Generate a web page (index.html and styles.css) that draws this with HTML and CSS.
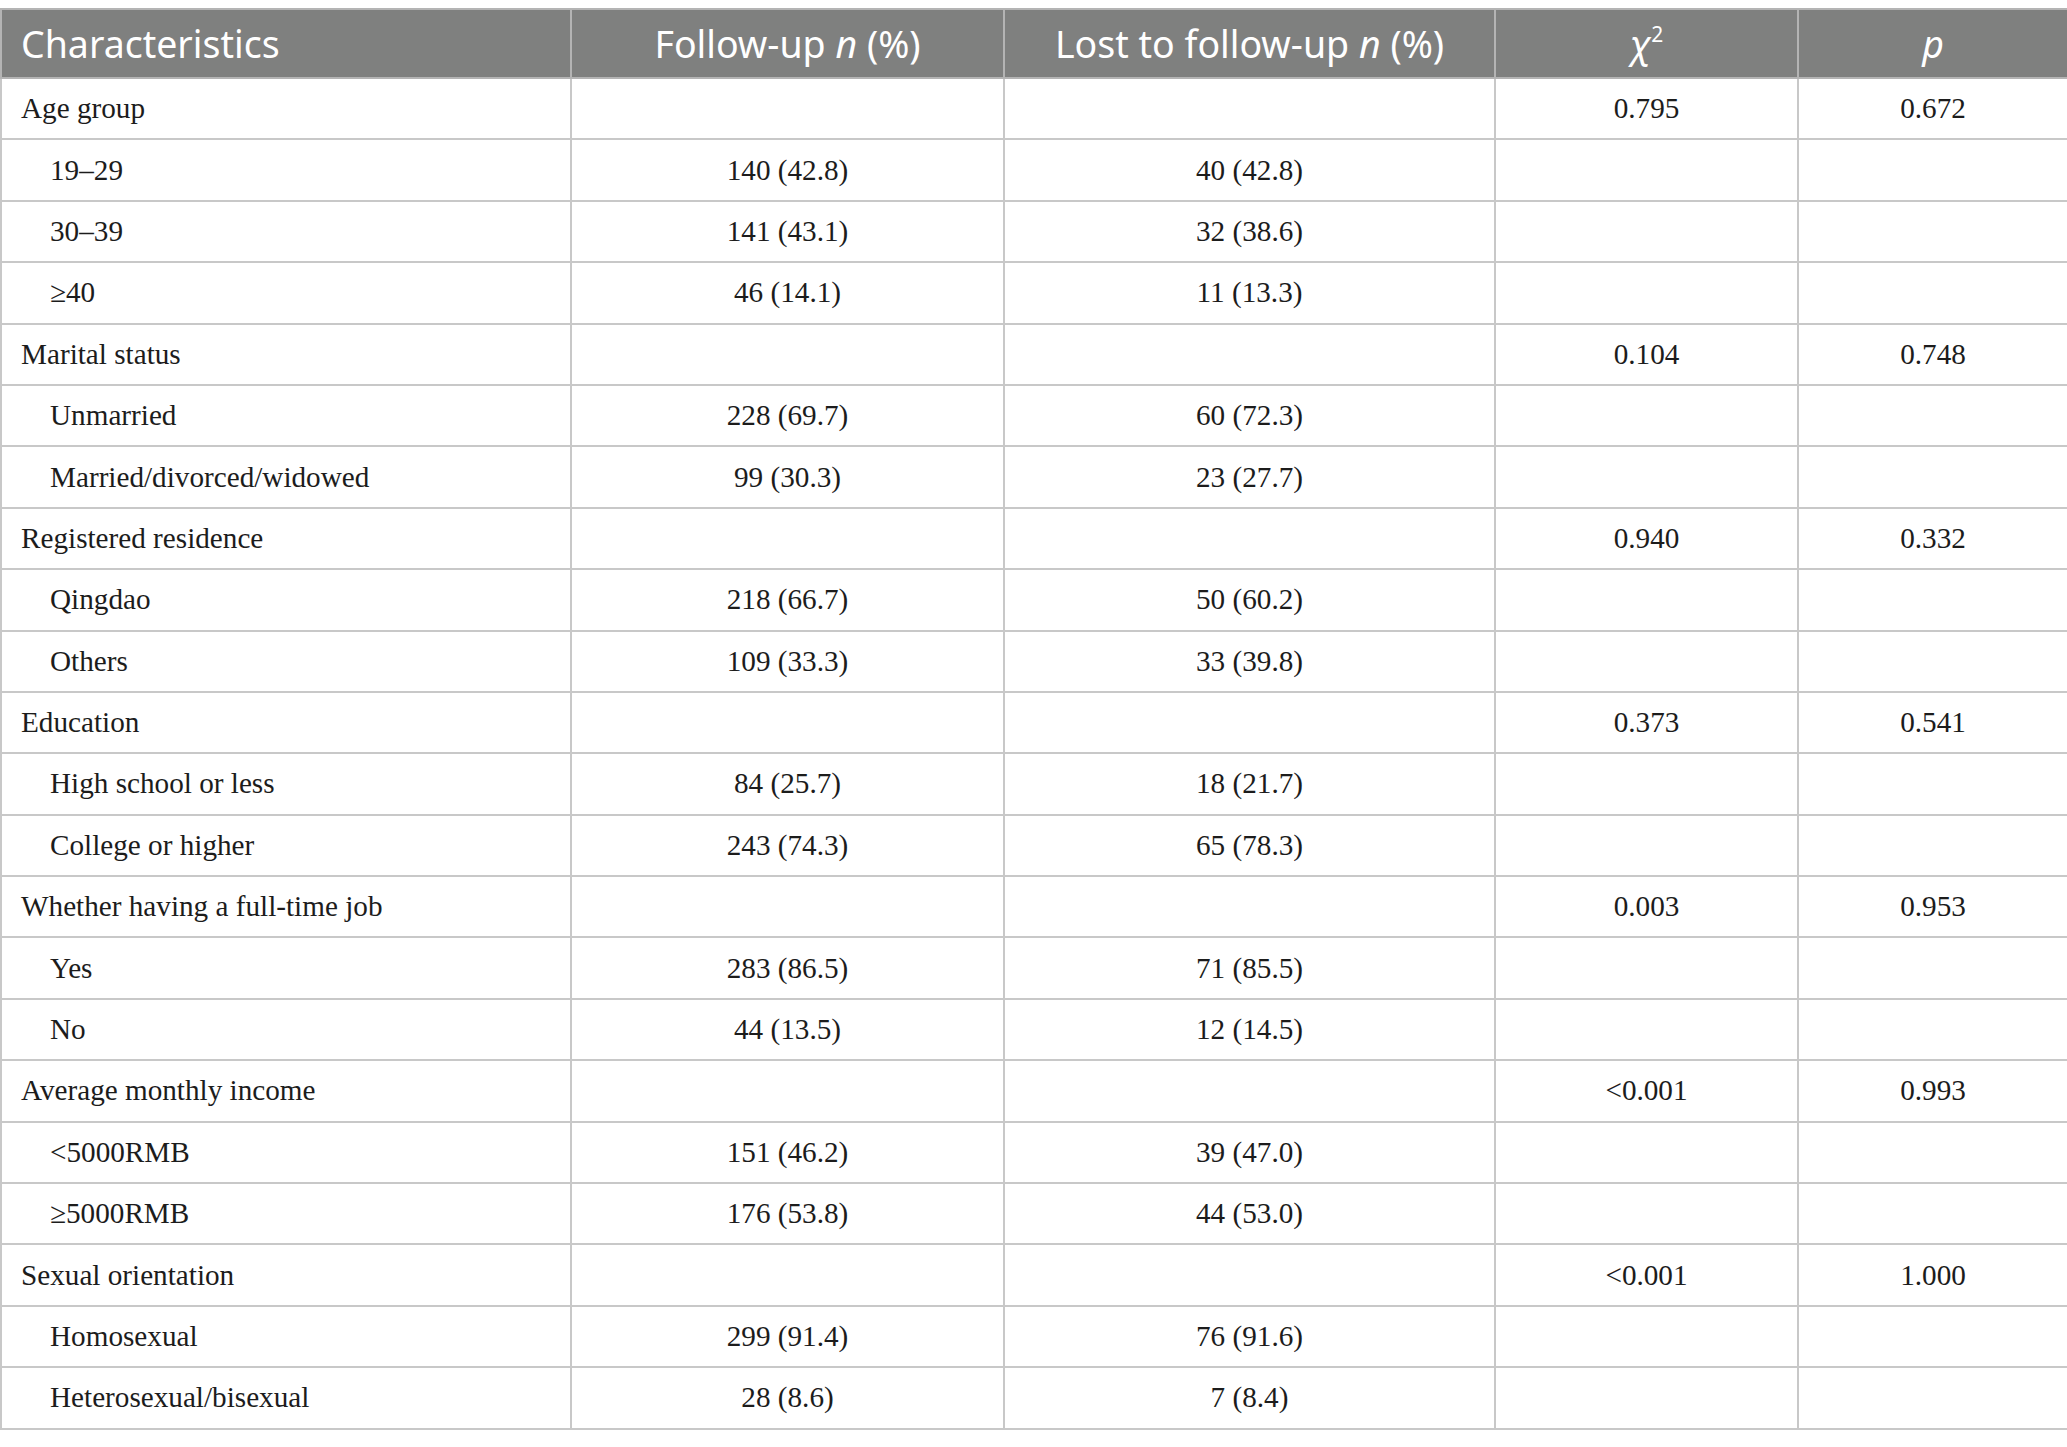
FILE: index.html
```html
<!DOCTYPE html>
<html>
<head>
<meta charset="utf-8">
<link rel="stylesheet" href="styles.css">
</head>
<body>
<table class="data">
  <colgroup>
    <col class="c1"><col class="c2"><col class="c3"><col class="c4"><col class="c5">
  </colgroup>
  <thead>
    <tr>
      <th class="left">Characteristics</th>
      <th>Follow-up <i>n</i> (%)</th>
      <th>Lost to follow-up <i>n</i> (%)</th>
      <th><i>χ</i><sup>2</sup></th>
      <th><i>p</i></th>
    </tr>
  </thead>
  <tbody>
    <tr><td>Age group</td><td></td><td></td><td>0.795</td><td>0.672</td></tr>
    <tr><td class="sub">19–29</td><td>140 (42.8)</td><td>40 (42.8)</td><td></td><td></td></tr>
    <tr><td class="sub">30–39</td><td>141 (43.1)</td><td>32 (38.6)</td><td></td><td></td></tr>
    <tr><td class="sub">≥40</td><td>46 (14.1)</td><td>11 (13.3)</td><td></td><td></td></tr>
    <tr><td>Marital status</td><td></td><td></td><td>0.104</td><td>0.748</td></tr>
    <tr><td class="sub">Unmarried</td><td>228 (69.7)</td><td>60 (72.3)</td><td></td><td></td></tr>
    <tr><td class="sub">Married/divorced/widowed</td><td>99 (30.3)</td><td>23 (27.7)</td><td></td><td></td></tr>
    <tr><td>Registered residence</td><td></td><td></td><td>0.940</td><td>0.332</td></tr>
    <tr><td class="sub">Qingdao</td><td>218 (66.7)</td><td>50 (60.2)</td><td></td><td></td></tr>
    <tr><td class="sub">Others</td><td>109 (33.3)</td><td>33 (39.8)</td><td></td><td></td></tr>
    <tr><td>Education</td><td></td><td></td><td>0.373</td><td>0.541</td></tr>
    <tr><td class="sub">High school or less</td><td>84 (25.7)</td><td>18 (21.7)</td><td></td><td></td></tr>
    <tr><td class="sub">College or higher</td><td>243 (74.3)</td><td>65 (78.3)</td><td></td><td></td></tr>
    <tr><td>Whether having a full-time job</td><td></td><td></td><td>0.003</td><td>0.953</td></tr>
    <tr><td class="sub">Yes</td><td>283 (86.5)</td><td>71 (85.5)</td><td></td><td></td></tr>
    <tr><td class="sub">No</td><td>44 (13.5)</td><td>12 (14.5)</td><td></td><td></td></tr>
    <tr><td>Average monthly income</td><td></td><td></td><td>&lt;0.001</td><td>0.993</td></tr>
    <tr><td class="sub">&lt;5000RMB</td><td>151 (46.2)</td><td>39 (47.0)</td><td></td><td></td></tr>
    <tr><td class="sub">≥5000RMB</td><td>176 (53.8)</td><td>44 (53.0)</td><td></td><td></td></tr>
    <tr><td>Sexual orientation</td><td></td><td></td><td>&lt;0.001</td><td>1.000</td></tr>
    <tr><td class="sub">Homosexual</td><td>299 (91.4)</td><td>76 (91.6)</td><td></td><td></td></tr>
    <tr><td class="sub">Heterosexual/bisexual</td><td>28 (8.6)</td><td>7 (8.4)</td><td></td><td></td></tr>
  </tbody>
</table>
</body>
</html>
```

FILE: styles.css
```css
html, body {
  margin: 0;
  padding: 0;
  background: #ffffff;
}
body {
  padding-top: 8px;
}
.data {
  width: 2067px;
  table-layout: fixed;
  border-collapse: collapse;
  border: 2px solid #c4c4c4;
}
.c1 { width: 570px; }
.c2 { width: 433px; }
.c3 { width: 491px; }
.c4 { width: 303px; }
.c5 { width: 270px; }
.data th {
  background: #7f807f;
  color: #ffffff;
  font-family: "Noto Sans", "Open Sans", sans-serif;
  font-weight: 400;
  font-size: 37.5px;
  line-height: 1.2;
  height: 67px;
  padding: 0 19px;
  text-align: center;
  vertical-align: middle;
  border: 2px solid #b4b4b4;
}
.data th.left {
  text-align: left;
}
.data th sup {
  font-size: 21px;
  vertical-align: 16px;
  line-height: 0;
}
.data td {
  font-family: "Liberation Serif", "Times New Roman", serif;
  font-size: 29.2px;
  color: #1c1c1c;
  height: 59.4px;
  padding: 0 19px;
  text-align: center;
  vertical-align: middle;
  border: 2px solid #c8c8c8;
}
.data td:first-child {
  text-align: left;
}
.data td.sub {
  padding-left: 48px;
}
```
